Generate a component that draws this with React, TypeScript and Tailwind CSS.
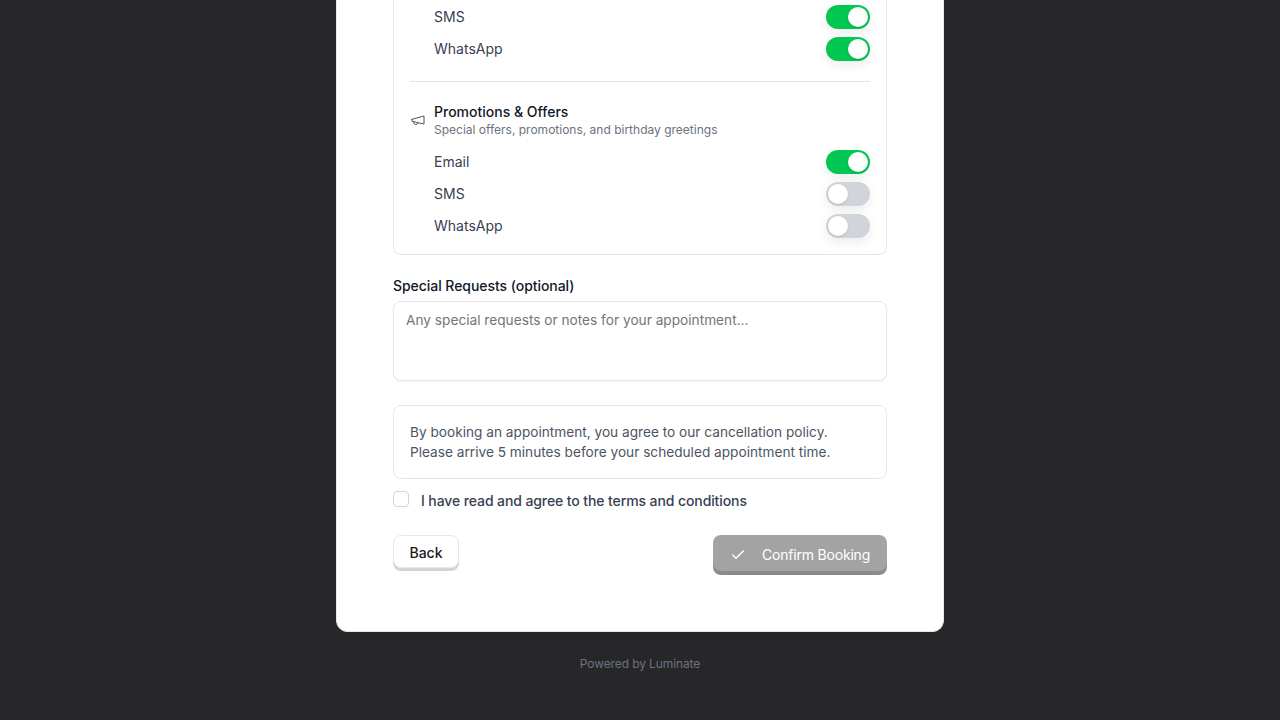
function Toggle({ on }: { on: boolean }) {
  return (
    <div
      className={`relative h-6 w-11 shrink-0 rounded-full shadow-[0_4px_12px_rgba(0,0,0,0.08)] ${on ? "bg-[#00c853]" : "bg-[#d1d5db]"}`}
    >
      <div
        className={`absolute top-[2px] h-5 w-5 rounded-full bg-white shadow-sm ${on ? "left-[22px]" : "left-[2px]"}`}
      />
    </div>
  );
}

function Row({ label, on }: { label: string; on: boolean }) {
  return (
    <div className="flex h-6 items-center justify-between pl-6">
      <span className="text-sm text-[#374151]">{label}</span>
      <Toggle on={on} />
    </div>
  );
}

export default function App() {
  return (
    <div className="flex h-[720px] flex-col items-center overflow-hidden bg-[#27272a] font-['Inter',sans-serif]">
      <div className="box-border flex h-[632px] w-[608px] shrink-0 flex-col rounded-b-xl border border-t-0 border-[#e5e7eb] bg-white px-14">
        <div className="h-[255px] rounded-b-lg border border-t-0 border-[#e5e7eb] px-4 pt-[5px]">
          <div className="flex flex-col gap-2">
            <Row label="SMS" on />
            <Row label="WhatsApp" on />
          </div>
          <div className="mt-5 border-t border-[#e5e7eb]" />
          <div className="mt-5 flex items-center gap-2">
            <svg width="16" height="16" viewBox="0 0 24 24" fill="none" stroke="#4b5563" strokeWidth="1.5" strokeLinecap="round" strokeLinejoin="round" className="shrink-0">
              <path d="m3 11 18-5v12L3 14v-3z" />
              <path d="M11.6 16.8a3 3 0 1 1-5.8-1.6" />
            </svg>
            <div>
              <div className="text-sm leading-5 font-medium text-[#111827]">Promotions &amp; Offers</div>
              <div className="text-xs leading-4 text-[#6b7280]">Special offers, promotions, and birthday greetings</div>
            </div>
          </div>
          <div className="mt-3 flex flex-col gap-2">
            <Row label="Email" on />
            <Row label="SMS" on={false} />
            <Row label="WhatsApp" on={false} />
          </div>
        </div>
        <label className="mt-[21px] block text-sm leading-5 font-medium tracking-[-0.05px] text-[#111827]">Special Requests (optional)</label>
        <textarea
          className="mt-[5px] box-border block h-20 w-full resize-none rounded-lg border border-[#e5e7eb] bg-white px-3 py-2 text-[13.68px] leading-5 text-[#111827] shadow-[0_1px_2px_rgba(0,0,0,0.05)] outline-none placeholder:text-[#757575]"
          placeholder="Any special requests or notes for your appointment..."
        />
        <div className="mt-6 box-border h-[74px] rounded-lg border border-[#e5e7eb] px-4 py-4 text-[13.66px] leading-5 text-[#4b5563]">
          <p>By booking an appointment, you agree to our cancellation policy.</p>
          <p>Please arrive 5 minutes before your scheduled appointment time.</p>
        </div>
        <div className="mt-3 flex items-start gap-3">
          <div className="box-border h-4 w-4 rounded border border-[#d1d5db] bg-white" />
          <span className="text-sm leading-5 font-medium tracking-[-0.1px] text-[#374151]">I have read and agree to the terms and conditions</span>
        </div>
        <div className="mt-6 flex items-start justify-between">
          <button className="box-border h-[33px] w-[66px] rounded-lg border border-[#e5e7eb] bg-white pt-[2px] text-sm font-medium text-[#18181b] shadow-[0_3px_0_#d4d4d8]">
            Back
          </button>
          <button className="flex h-9 w-[174px] items-center gap-4 rounded-lg bg-[#a3a3a3] pt-1 pl-[17px] text-sm font-normal tracking-[-0.2px] text-white shadow-[0_4px_0_#8a8a8a]">
            <svg width="16" height="16" viewBox="0 0 24 24" fill="none" stroke="currentColor" strokeWidth="2" strokeLinecap="round" strokeLinejoin="round">
              <path d="M20 6 9 17l-5-5" />
            </svg>
            Confirm Booking
          </button>
        </div>
      </div>
      <div className="mt-6 text-xs leading-4 tracking-[-0.1px] text-[#6b7280]">Powered by Luminate</div>
    </div>
  );
}
